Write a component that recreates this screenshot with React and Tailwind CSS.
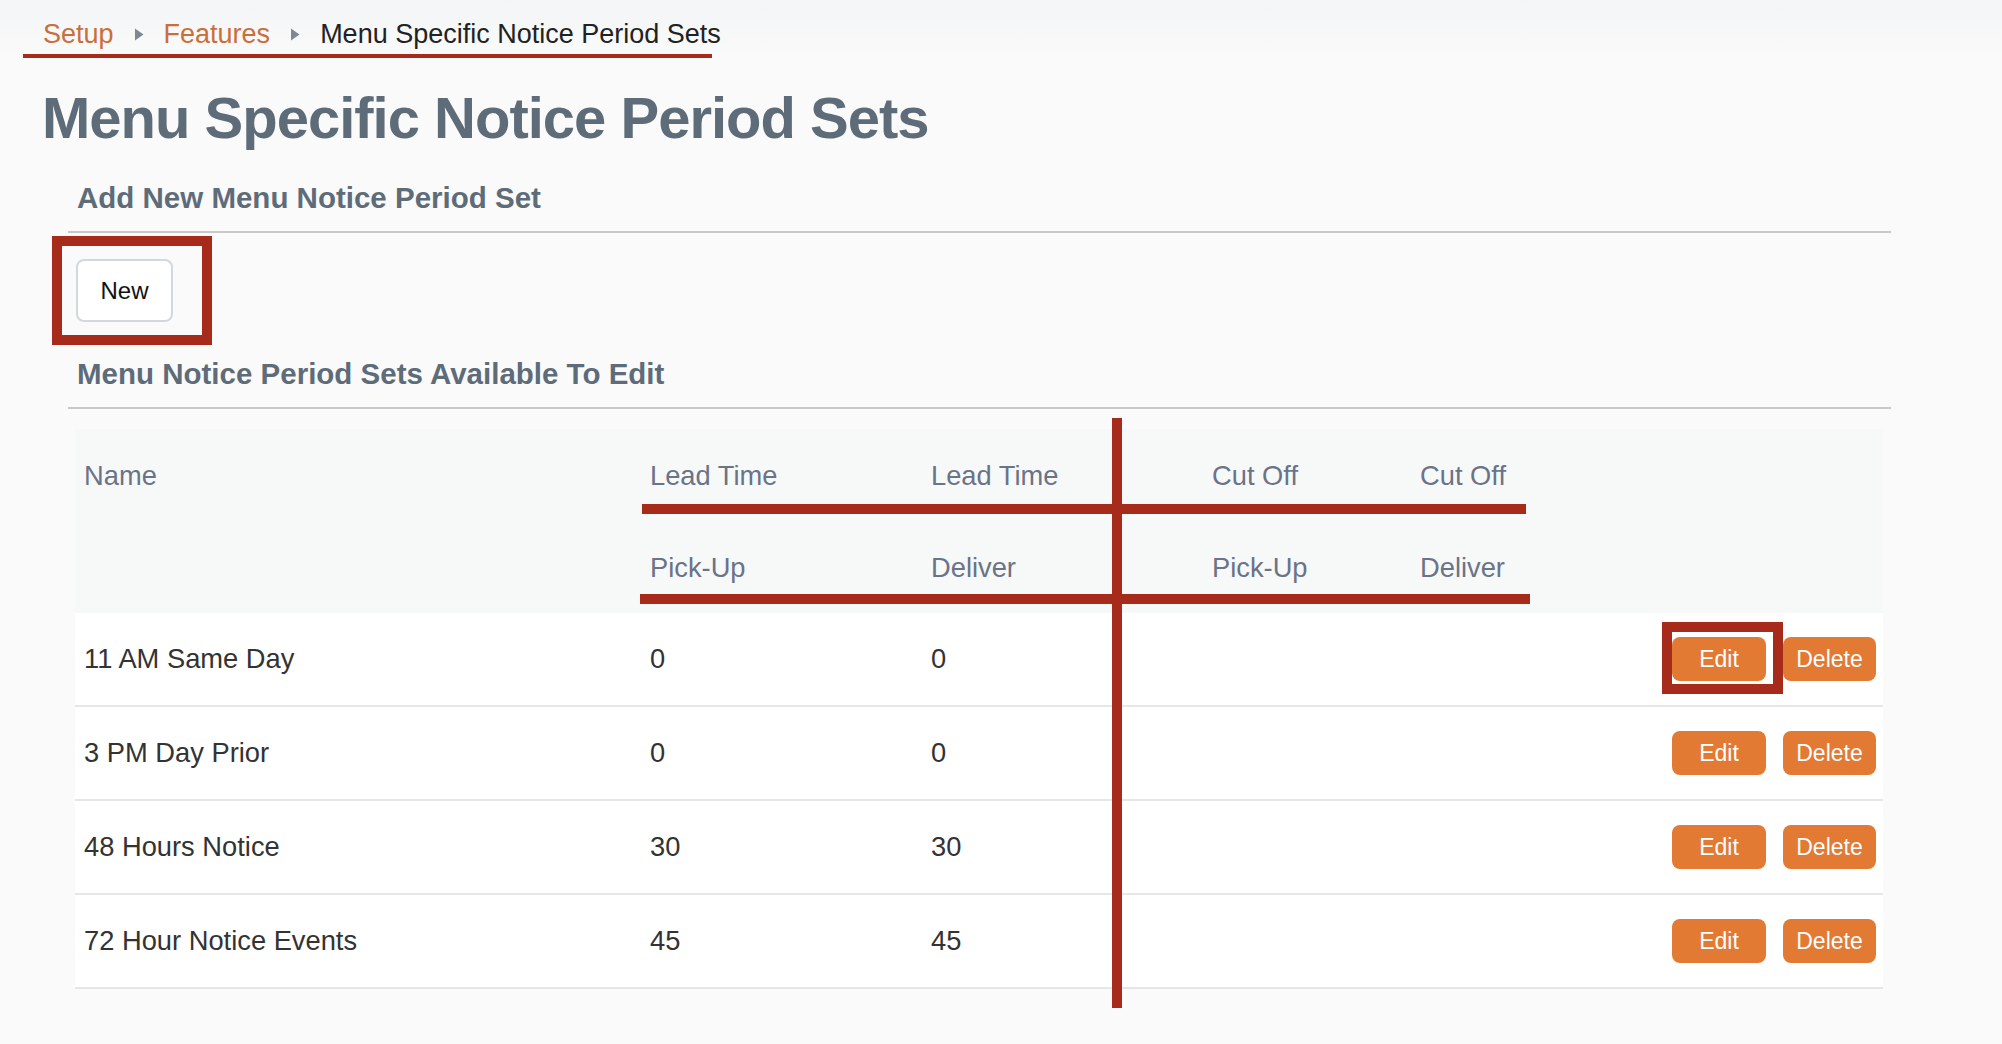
import React from 'react'

const rows = [
  { name: '11 AM Same Day', lp: '0', ld: '0', marked: true },
  { name: '3 PM Day Prior', lp: '0', ld: '0' },
  { name: '48 Hours Notice', lp: '30', ld: '30' },
  { name: '72 Hour Notice Events', lp: '45', ld: '45' },
]

function Arrow() {
  return (
    <svg width="10" height="13" viewBox="0 0 10 13" className="shrink-0">
      <path d="M1 0.5 L9.5 6.5 L1 12.5 Z" fill="#7d8893" />
    </svg>
  )
}

const grid = 'grid grid-cols-[567px_281px_281px_208px_200px_1fr]'

export default function App() {
  return (
    <div className="min-h-screen bg-[#fafafa] font-['Liberation_Sans',Arial,sans-serif] pb-[60px]">
      <div className="bg-gradient-to-b from-[#f3f5f6] to-[#fafafa]">
        <nav className="ml-[23px] w-[689px] pt-[19px] pb-[4px] px-[20px] border-b-[4px] border-[#a62b1b] flex items-center gap-[20px] text-[27px] leading-[31px] whitespace-nowrap">
          <a className="text-[#cc6e3a]">Setup</a>
          <Arrow />
          <a className="text-[#cc6e3a]">Features</a>
          <Arrow />
          <span className="text-[#222]">Menu Specific Notice Period Sets</span>
        </nav>
      </div>

      <h1 className="mt-[31px] pl-[42px] text-[58px] leading-[58px] tracking-[-1px] font-bold text-[#5e6c79]">
        Menu Specific Notice Period Sets
      </h1>

      <div className="ml-[68px] w-[1823px]">
        <h2 className="mt-[36px] pl-[9px] text-[29.5px] leading-[29px] font-bold text-[#5e6c79]">
          Add New Menu Notice Period Set
        </h2>
        <div className="mt-[19px] border-t-2 border-[#c8c8c8]" />

        <div className="mt-[26px] pl-[8px]">
          <div className="relative inline-block">
            <button className="w-[97px] h-[63px] bg-white border-2 border-[#d3d8de] rounded-[8px] text-[24px] text-[#111]">
              New
            </button>
            <span className="absolute -left-[24px] -top-[23px] w-[160px] h-[109px] border-[10px] border-[#a62b1b] pointer-events-none" />
          </div>
        </div>

        <h2 className="mt-[37px] pl-[9px] text-[29.5px] leading-[29px] font-bold text-[#5e6c79]">
          Menu Notice Period Sets Available To Edit
        </h2>
        <div className="mt-[19px] border-t-2 border-[#c8c8c8]" />

        <div className="relative mt-[20px] ml-[7px] w-[1808px] text-[27.3px]">
          <div className="bg-[#f7f9f9] text-[#6b7388]">
            <div className={`${grid} h-[94px] items-center`}>
              <div className="pl-[9px]">Name</div>
              <div className="pl-[8px]">Lead Time</div>
              <div className="pl-[8px]">Lead Time</div>
              <div className="pl-[8px]">Cut Off</div>
              <div className="pl-[8px]">Cut Off</div>
              <div />
            </div>
            <div className={`${grid} h-[90px] items-center`}>
              <div />
              <div className="pl-[8px]">Pick-Up</div>
              <div className="pl-[8px]">Deliver</div>
              <div className="pl-[8px]">Pick-Up</div>
              <div className="pl-[8px]">Deliver</div>
              <div />
            </div>
          </div>

          {rows.map((r) => (
            <div key={r.name} className={`${grid} h-[94px] items-center bg-white border-b-2 border-[#e6e6e6] text-[#333]`}>
              <div className="pl-[9px]">{r.name}</div>
              <div className="pl-[8px]">{r.lp}</div>
              <div className="pl-[8px]">{r.ld}</div>
              <div />
              <div />
              <div className="flex justify-end gap-[17px] pr-[7px]">
                <div className="relative">
                  <button className="w-[94px] h-[44px] rounded-[8px] bg-[#e27a33] text-white text-[23px]">Edit</button>
                  {r.marked && (
                    <span className="absolute -left-[10px] -top-[15px] w-[121px] h-[72px] border-[10px] border-[#a62b1b] pointer-events-none" />
                  )}
                </div>
                <button className="w-[93px] h-[44px] rounded-[8px] bg-[#e27a33] text-white text-[23px]">Delete</button>
              </div>
            </div>
          ))}

          {/* annotation lines */}
          <span className="absolute left-[1037px] -top-[11px] w-[10px] h-[590px] bg-[#a62b1b]" />
          <span className="absolute left-[567px] top-[75px] w-[884px] h-[10px] bg-[#a62b1b]" />
          <span className="absolute left-[565px] top-[165px] w-[890px] h-[10px] bg-[#a62b1b]" />
        </div>
      </div>
    </div>
  )
}
